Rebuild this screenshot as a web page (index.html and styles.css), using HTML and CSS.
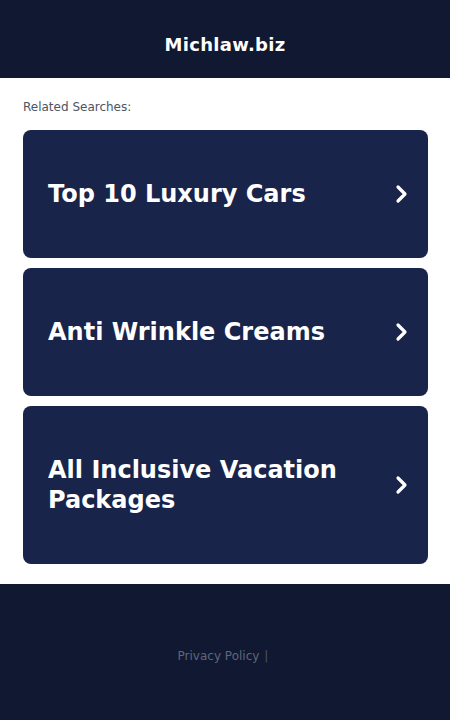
FILE: index.html
```html
<!DOCTYPE html>
<html>
<head>
<meta charset="utf-8">
<link rel="stylesheet" href="styles.css">
</head>
<body>
<header class="header">
  <h1 class="domain">Michlaw.biz</h1>
</header>
<main class="main">
  <p class="related">Related Searches:</p>
  <ul class="list">
    <li><a class="card" href="#"><span class="card-title">Top 10 Luxury Cars</span><svg class="chev" viewBox="0 0 16 20" width="16" height="20"><path d="M4 3 L11 10 L4 17" fill="none" stroke="#fff" stroke-width="3.2" stroke-linecap="round" stroke-linejoin="round"/></svg></a></li>
    <li><a class="card" href="#"><span class="card-title">Anti Wrinkle Creams</span><svg class="chev" viewBox="0 0 16 20" width="16" height="20"><path d="M4 3 L11 10 L4 17" fill="none" stroke="#fff" stroke-width="3.2" stroke-linecap="round" stroke-linejoin="round"/></svg></a></li>
    <li><a class="card" href="#"><span class="card-title">All Inclusive Vacation Packages</span><svg class="chev" viewBox="0 0 16 20" width="16" height="20"><path d="M4 3 L11 10 L4 17" fill="none" stroke="#fff" stroke-width="3.2" stroke-linecap="round" stroke-linejoin="round"/></svg></a></li>
  </ul>
</main>
<footer class="footer">
  <a class="policy" href="#">Privacy Policy</a><span class="sep">|</span>
</footer>
</body>
</html>
```

FILE: styles.css
```css
* { box-sizing: border-box; }
html, body { margin: 0; padding: 0; }
body {
  font-family: "DejaVu Sans", sans-serif;
  background: #fff;
  width: 450px;
}
.header {
  background: #111831;
  height: 78px;
  display: flex;
  align-items: center;
  justify-content: center;
}
.domain {
  margin: 0;
  color: #fff;
  font-family: "DejaVu Sans", sans-serif;
  font-weight: bold;
  font-size: 18px;
  letter-spacing: 0.3px;
  padding-top: 10px;
}
.main {
  padding: 22px 22px 20px 23px;
}
.related {
  margin: 0 0 16px;
  font-size: 12px;
  line-height: 14px;
  color: #4b5563;
}
.list {
  list-style: none;
  margin: 0;
  padding: 0;
  display: flex;
  flex-direction: column;
  gap: 10px;
}
.card {
  display: flex;
  align-items: center;
  justify-content: space-between;
  background: #19244a;
  border-radius: 8px;
  padding: 49px 18px 49px 25px;
  text-decoration: none;
  color: #fff;
}
.card-title {
  font-size: 24px;
  line-height: 30px;
  font-weight: bold;
  max-width: 320px;
}
.chev { flex: none; }
.footer {
  background: #111831;
  height: 136px;
  display: flex;
  align-items: center;
  justify-content: center;
  font-size: 12px;
  padding-top: 8px;
  padding-right: 4px;
}
.policy { color: #5f6779; text-decoration: none; }
.sep { color: #4b5563; margin-left: 5px; }
```
